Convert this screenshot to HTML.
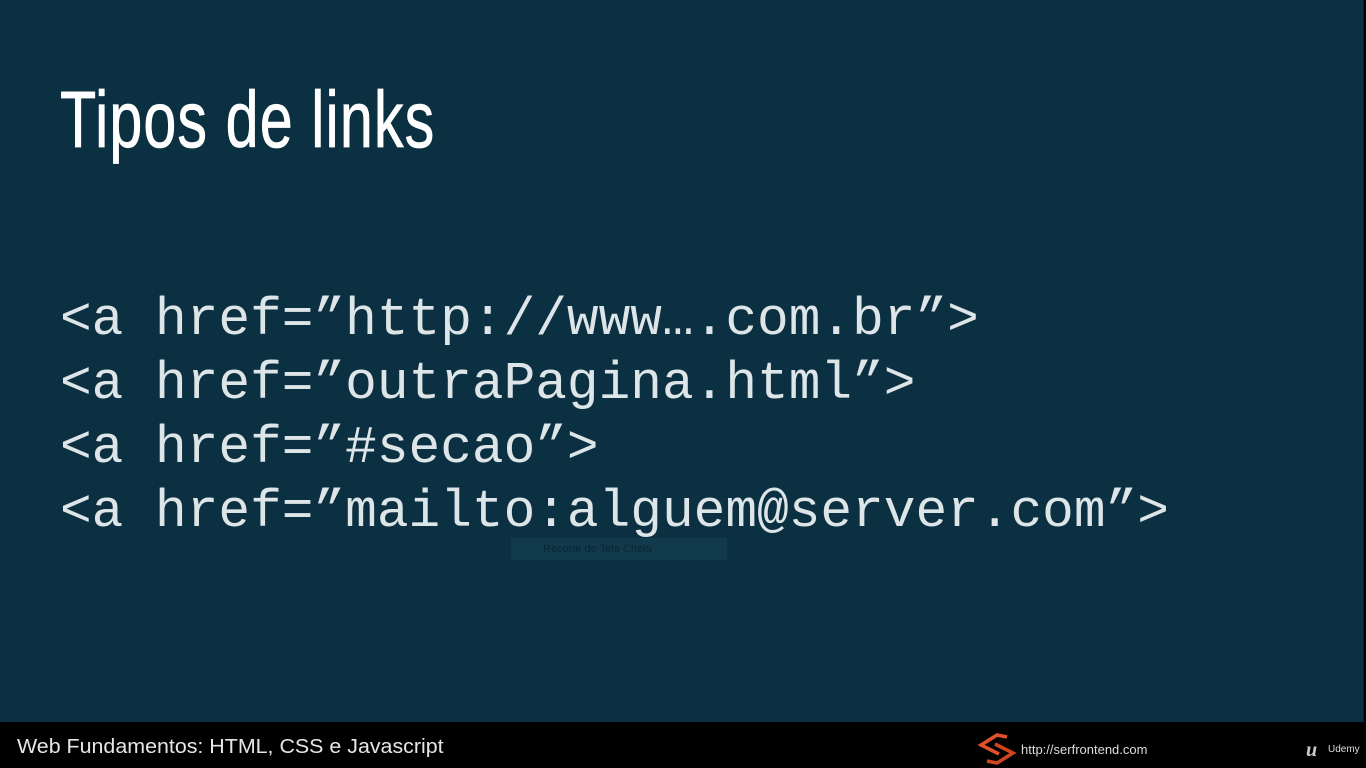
<!DOCTYPE html>
<html><head><meta charset="utf-8"><style>
html,body{margin:0;padding:0;width:1366px;height:768px;overflow:hidden;background:#000;}
.slide{position:absolute;left:0;top:0;width:1363px;height:722px;background:#0b3041;border-right:1px solid #072330;}
.title{position:absolute;left:60px;top:74px;font-family:"Liberation Sans",sans-serif;font-size:80px;color:#fff;transform:scaleX(0.74);transform-origin:left top;letter-spacing:1.5px;white-space:nowrap;-webkit-text-stroke:0.8px #fff;}
.code{position:absolute;left:60px;font-family:"Liberation Mono",monospace;font-size:52.8px;color:#dde5e8;white-space:pre;line-height:64px;}
.tip{position:absolute;left:511px;top:538px;width:216px;height:22px;background:#123a4d;font-family:"Liberation Sans",sans-serif;font-size:11px;color:#0a2533;line-height:22px;text-indent:32px;}
.bar{position:absolute;left:0;top:722px;width:1366px;height:46px;background:#000;}
.bt{position:absolute;left:17px;top:736px;font-family:"Liberation Sans",sans-serif;font-size:20px;color:#e6e6e6;transform:scaleX(1.07);transform-origin:left top;white-space:nowrap;}
.url{position:absolute;left:1021px;top:742px;font-family:"Liberation Sans",sans-serif;font-size:13px;color:#ddd;}
.ud{position:absolute;left:1328px;top:744px;font-family:"Liberation Sans",sans-serif;font-size:10px;color:#ddd;}
</style></head><body>
<div class="slide"></div>
<div class="title">Tipos de links</div>
<div class="code" style="top:288px">&lt;a href=”http://www….com.br”&gt;
&lt;a href=”outraPagina.html”&gt;
&lt;a href=”#secao”&gt;
&lt;a href=”mailto:alguem@server.com”&gt;</div>
<div class="tip">Recorte de Tela Cheia</div>
<div class="bar"></div>
<div class="bt">Web Fundamentos: HTML, CSS e Javascript</div>
<svg style="position:absolute;left:977px;top:733px" width="40" height="32" viewBox="0 0 40 32">
<path d="M30 4 L20 2 L4 12 L22 21" stroke="#e0512b" stroke-width="3.5" fill="none"/>
<path d="M10 28 L20 30 L36 20 L18 11" stroke="#d0451f" stroke-width="3.5" fill="none"/>
</svg>
<div class="url">http://serfrontend.com</div>
<div style="position:absolute;left:1306px;top:739px;font-family:'Liberation Serif',serif;font-style:italic;font-weight:bold;font-size:20px;color:#ccc">u</div>
<div class="ud">Udemy</div>
</body></html>
